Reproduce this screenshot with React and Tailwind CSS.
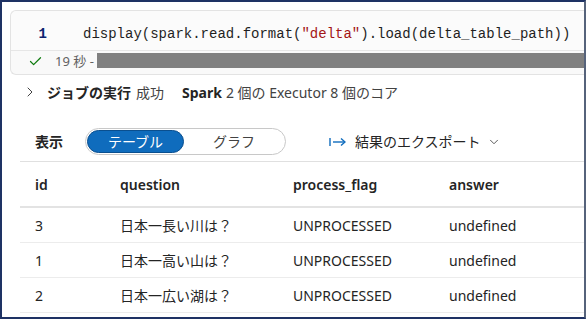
import React from "react";
import { Check, ChevronRight, ChevronDown } from "lucide-react";

const sans = "font-['Noto_Sans','Noto_Sans_CJK_JP',sans-serif]";

export default function App() {
  const rows = [
    ["3", "日本一長い川は？"],
    ["1", "日本一高い山は？"],
    ["2", "日本一広い湖は？"],
  ];
  return (
    <div className={`w-[586px] h-[319px] overflow-hidden bg-white border-2 border-[#1e3264] border-r-[#56637b] ${sans} text-[#242424]`}>
      {/* code cell */}
      <div className="ml-[8px] mt-[8px] rounded-l-md border border-r-0 border-[#e3e3e3] bg-[#f9f9f9]">
        <div className="h-[39px] pt-[7px] flex items-center bg-[#fbfbfb] rounded-tl-md">
          <span className="w-[36px] text-right font-['Liberation_Mono',monospace] text-[14px] text-[#0c2370] font-bold">1</span>
          <span className="ml-[36px] font-['Liberation_Mono',monospace] text-[14px] text-[#1f1f1f] whitespace-nowrap">
            display(spark.read.format(<span className="text-[#a31515]">"delta"</span>).load(delta_table_path))
          </span>
        </div>
        <div className="h-[24px] flex items-start pt-[2px] border-t border-[#e6e6e6]">
          <Check className="ml-[17px] mt-[1px] w-[15px] h-[15px] text-[#107c10]" strokeWidth={2} />
          <span className="ml-[12px] leading-[16px] text-[13px] text-[#616161] whitespace-nowrap">19 秒 -</span>
          <div className="ml-[3px] flex-1 h-[15px] bg-[#808080]" />
        </div>
      </div>

      {/* job row */}
      <div className="h-[28px] mt-[3px] flex items-center text-[14px] whitespace-nowrap">
        <ChevronRight className="ml-[20px] w-[16px] h-[16px] text-[#424242]" strokeWidth={1.5} />
        <span className="ml-[9px] font-bold">ジョブの実行</span>
        <span className="ml-[5px] text-[#424242]">成功</span>
        <span className="ml-[18px] font-bold">Spark</span>
        <span className="ml-[4px] text-[#424242]">2 個の Executor 8 個のコア</span>
      </div>

      {/* view toggle row */}
      <div className="mt-[22px] h-[27px] flex items-center text-[14px] whitespace-nowrap">
        <span className="ml-[33px] font-bold">表示</span>
        <div className="ml-[22px] w-[201px] h-[27px] rounded-full border border-[#c8c8c8] flex items-center p-[1px]">
          <div className="w-[97px] h-[23px] rounded-full bg-[#0f6cbd] border border-[#0a4f8f] text-white flex items-center justify-center">テーブル</div>
          <div className="flex-1 flex items-center justify-center text-[#424242]">グラフ</div>
        </div>
        <svg className="ml-[43px]" width="17" height="12" viewBox="0 0 17 12" fill="none" stroke="#0f6cbd" strokeWidth="1.4">
          <path d="M1 2v8" />
          <path d="M4 6h12" />
          <path d="M12 2.5l4 3.5-4 3.5" />
        </svg>
        <span className="ml-[9px] text-[#242424]">結果のエクスポート</span>
        <ChevronDown className="ml-[6px] w-[14px] h-[14px] text-[#424242]" strokeWidth={1.5} />
      </div>

      {/* table */}
      <div className="ml-[18px] mt-[6px] border-t border-[#e0e0e0] text-[14px]">
        <div className="h-[46px] grid grid-cols-[85px_173px_156px_1fr] items-center border-b-2 border-[#e3e3e3] font-semibold">
          <span className="pl-[15px]">id</span>
          <span className="pl-[15px]">question</span>
          <span className="pl-[15px]">process_flag</span>
          <span className="pl-[15px]">answer</span>
        </div>
        {rows.map(([id, q]) => (
          <div key={id} className="h-[35px] grid grid-cols-[85px_173px_156px_1fr] items-center border-b border-[#ececec]">
            <span className="pl-[15px]">{id}</span>
            <span className="pl-[15px]">{q}</span>
            <span className="pl-[15px]">UNPROCESSED</span>
            <span className="pl-[15px]">undefined</span>
          </div>
        ))}
      </div>
    </div>
  );
}
